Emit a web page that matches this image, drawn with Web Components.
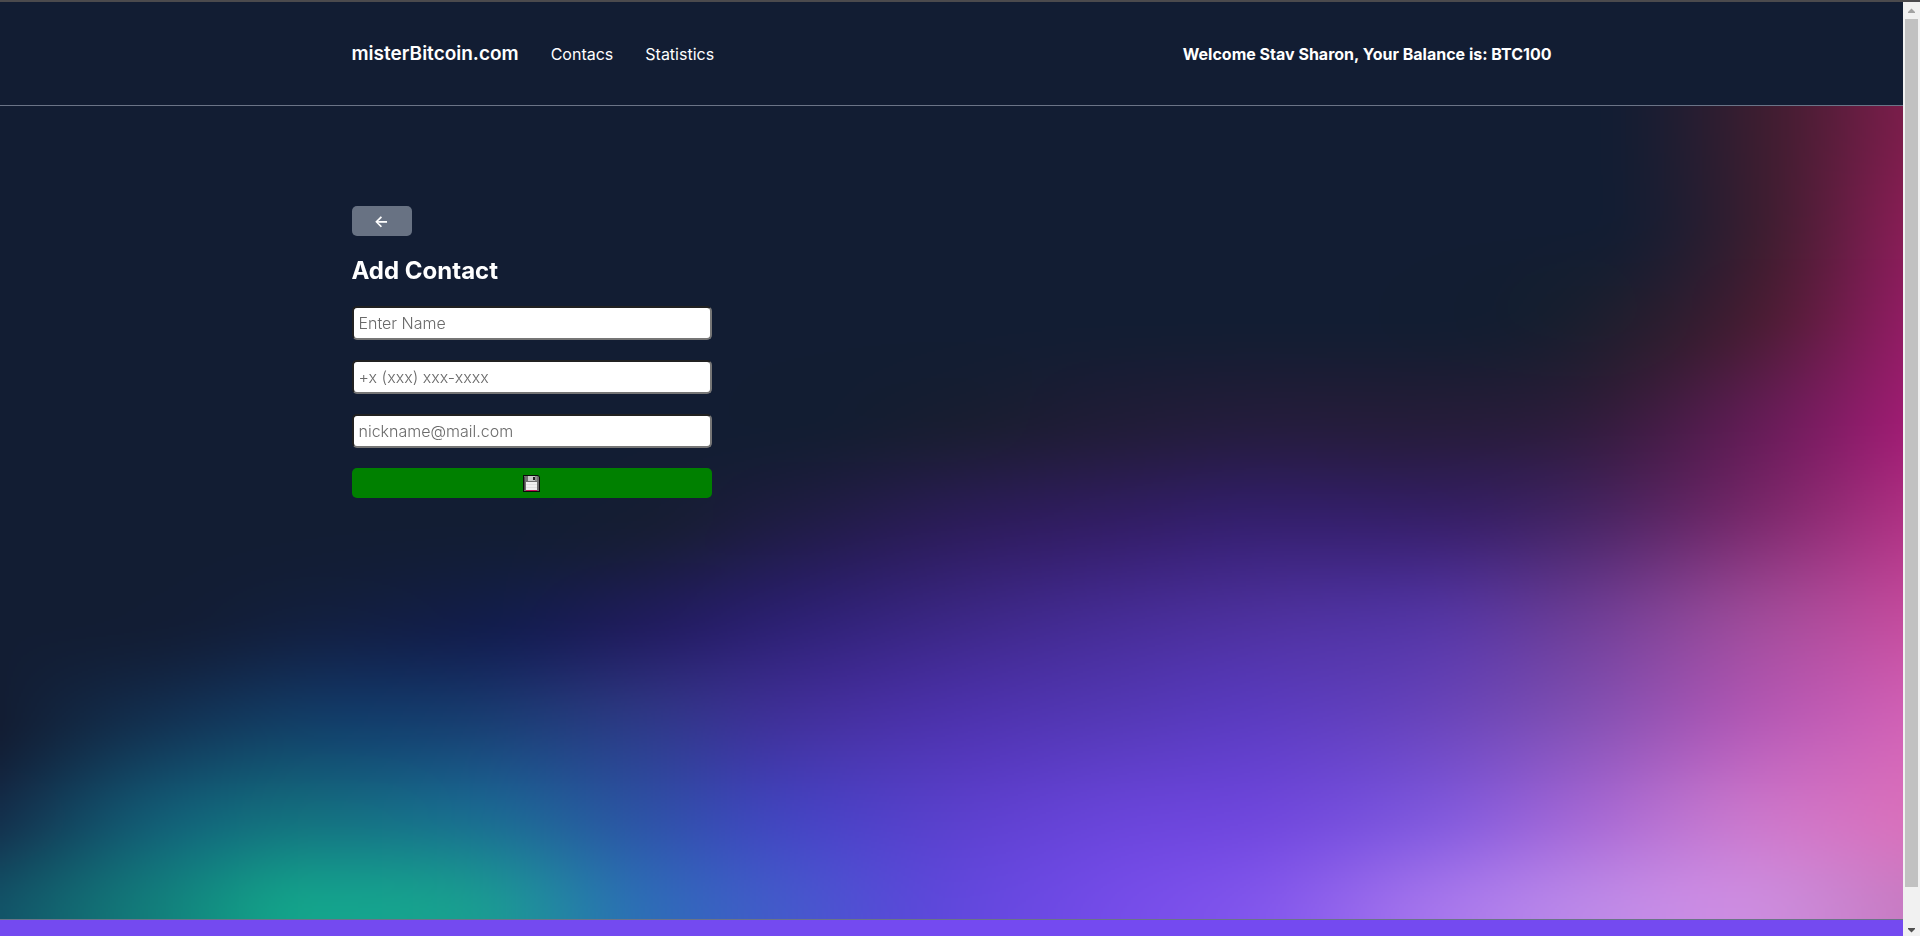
<!DOCTYPE html>
<html lang="en">
<head>
<meta charset="utf-8">
<meta name="viewport" content="width=device-width, initial-scale=1">
<title>misterBitcoin.com</title>
<style>
  body { margin: 0; font-family: Inter, "Liberation Sans", sans-serif; font-size: 16px; color: #fff; background: #121d33; }
</style>
</head>
<body>
<mb-app>
  <mb-header slot="header" user="Stav Sharon" balance="BTC100"></mb-header>
  <mb-contact-edit>Add Contact</mb-contact-edit>
</mb-app>

<script>
const define = (name, html, setup) => {
  const template = document.createElement('template');
  template.innerHTML = html;
  customElements.define(name, class extends HTMLElement {
    constructor() {
      super();
      this.attachShadow({ mode: 'open' }).append(template.content.cloneNode(true));
    }
    connectedCallback() { if (setup) setup(this, this.shadowRoot); }
  });
};

/* Mesh gradient: a grid of colours, spread evenly and blended smoothly. */
const MESH = [
  '121d33 121d33 121d33 121d33 121d33 121d33 121d33 121d33 121d33 121d33 121d33 371d30 7a1d4a',
  '121d33 121d33 121d33 121d33 121d33 121d33 121d33 121d33 121d33 121d33 121d33 361d30 841d52',
  '121d33 121d33 121d33 121d33 121d33 121d33 121d33 121d33 121d33 121d32 1a1e2f 421c32 8e1c60',
  '121d33 121d33 121d33 121d33 121d33 121d32 171d31 1e1c36 221c3a 231c38 2e1c3a 5c1c50 9c1c70',
  '121d33 121d33 121d33 121d33 151d33 1e1c42 291c54 301d60 331f6a 351f66 462462 75286a ad3082',
  '121d33 121d34 121f3e 121d48 1e1c58 2c2070 3a2682 442b92 4c309c 5234a0 6c3c94 9a4897 c24a9c',
  '121d33 123050 123c66 183c70 2c3884 40309a 4c32ac 5438b6 5c3cc0 6844bc 8450b4 b058b4 d060b4',
  '13304c 125c74 147080 1a6c90 2c54a4 4444c0 5a40cc 6844d8 7048dc 8058dc a468d4 c876cc d870bc',
  '125468 12807c 14a48c 1a9c92 2c70b4 4658cc 6048dc 744ce8 8458ec a474ec bc88e8 cc8ce0 c87cc4'
].map(row => row.split(' ').map(c => [0, 2, 4].map(i => parseInt(c.slice(i, i + 2), 16))));

define('mb-mesh', `
  <style>
    :host { display: block; overflow: hidden; }
    canvas { display: block; width: 100%; height: 100%; }
  </style>
  <canvas width="960" height="408" aria-hidden="true"></canvas>`,
(el, root) => {
  const canvas = root.querySelector('canvas');
  const ctx = canvas.getContext('2d');
  const { width, height } = canvas;
  const image = ctx.createImageData(width, height);
  const rows = MESH.length, cols = MESH[0].length;
  const at = (list, i) => list[Math.max(0, Math.min(list.length - 1, i))];
  /* Monotone cubic: never overshoots the colours of the grid. */
  const slope = (p, q) => p * q <= 0 ? 0 : Math.sign(p) * Math.min(Math.abs(p + q) / 2, 3 * Math.abs(p), 3 * Math.abs(q));
  const spline = (a, b, c, d, t) => {
    const m = slope(b - a, c - b), n = slope(c - b, d - c), s = 1 - t;
    return b * s * s * (1 + 2 * t) + m * t * s * s + c * t * t * (3 - 2 * t) - n * t * t * s;
  };
  for (let y = 0; y < height; y++) {
    const v = y / (height - 1) * (rows - 1), j = Math.min(rows - 2, Math.floor(v));
    const line = MESH[0].map((_, i) => [0, 1, 2].map(k => spline(
      at(MESH, j - 1)[i][k], MESH[j][i][k], MESH[j + 1][i][k], at(MESH, j + 2)[i][k], v - j)));
    /* Carry the trend on past the side edges. */
    const beyond = (edge, inner) => edge.map((c, k) => 2 * c - inner[k]);
    const wide = [beyond(line[0], line[1]), ...line, beyond(line[cols - 1], line[cols - 2])];
    for (let x = 0; x < width; x++) {
      const u = x / (width - 1) * (cols - 1), i = Math.min(cols - 2, Math.floor(u));
      const p = (y * width + x) * 4;
      for (let k = 0; k < 3; k++)
        image.data[p + k] = spline(wide[i][k], wide[i + 1][k], wide[i + 2][k], wide[i + 3][k], u - i);
      image.data[p + 3] = 255;
    }
  }
  ctx.putImageData(image, 0, 0);
});

define('mb-header', `
  <style>
    :host { display: block; background: #121d33; border-bottom: 1px solid #6b7487; }
    .row { display: flex; align-items: center; gap: 32px; max-width: 1200px; height: 103px; margin: 0 auto; }
    h1 { margin: 0; font-size: 19px; font-weight: 600; line-height: 24px; }
    nav { display: flex; gap: 32px; }
    a { color: inherit; text-decoration: none; line-height: 20px; }
    p { margin: 0 0 0 auto; font-weight: 700; line-height: 20px; }
  </style>
  <header class="row">
    <h1>misterBitcoin.com</h1>
    <nav><a href="#contacts">Contacs</a><a href="#statistics">Statistics</a></nav>
    <p></p>
  </header>`,
(el, root) => {
  root.querySelector('p').textContent =
    `Welcome ${el.getAttribute('user')}, Your Balance is: ${el.getAttribute('balance')}`;
});

define('mb-field', `
  <style>
    :host { display: block; }
    input { display: block; box-sizing: border-box; width: 100%; height: 34px; padding: 4px 5px; margin: 0;
      font: inherit; font-weight: 300; background: #fff; color: #000; border: 2px inset #767676; border-radius: 5px; }
    input::placeholder { color: #6a6a6a; }
  </style>
  <input>`,
(el, root) => {
  const input = root.querySelector('input');
  input.type = el.getAttribute('type');
  input.placeholder = el.getAttribute('placeholder');
  input.setAttribute('aria-label', el.getAttribute('label'));
});

define('mb-button', `
  <style>
    :host { display: block; }
    button { display: flex; align-items: center; justify-content: center; width: 100%; height: 30px;
      padding: 0; border: 0; border-radius: 5px; font: inherit; font-weight: 600; color: #fff;
      background: var(--fill, #687283); cursor: pointer; }
  </style>
  <button type="button"><slot></slot></button>`,
(el, root) => root.querySelector('button').setAttribute('aria-label', el.getAttribute('label')));

define('mb-contact-edit', `
  <style>
    :host { display: block; max-width: 1200px; margin: 0 auto; padding-top: 100px; }
    .back { width: 60px; }
    h2 { margin: 20px 0; font-size: 24px; font-weight: 700; line-height: 30px; }
    form { display: grid; gap: 20px; max-width: 360px; }
    .save { --fill: #008000; }
    svg { display: block; }
  </style>
  <mb-button class="back" label="Back">←</mb-button>
  <h2><slot></slot></h2>
  <form>
    <mb-field type="text" label="Name" placeholder="Enter Name"></mb-field>
    <mb-field type="tel" label="Phone" placeholder="+x (xxx) xxx-xxxx"></mb-field>
    <mb-field type="email" label="Email" placeholder="nickname@mail.com"></mb-field>
    <mb-button class="save" label="Save">
      <svg width="17" height="17" viewBox="0 0 17 17" aria-hidden="true">
        <path d="M0 0H15L17 2V17H0Z" fill="#0b0b0b"/>
        <path d="M1 1H15L16 2V16H1Z" fill="#6f6f6f"/>
        <path d="M1 2H2V15H1Z" fill="#4a4a4a"/>
        <path d="M5 1H12V6H5Z" fill="#c9c9c9"/>
        <path d="M10 2H12V5H10Z" fill="#222"/>
        <path d="M12 1H14V6H12Z" fill="#8f8f8f"/>
        <path d="M3 7H14V15H3Z" fill="#f0f0f0"/>
        <path d="M3 9.500H14M3 12.500H14" stroke="#e2e2e2" stroke-width="1"/>
        <path d="M3 15H14V16H3Z" fill="#c8175d"/>
      </svg>
    </mb-button>
  </form>`);

define('mb-scrollbar', `
  <style>
    :host { display: flex; flex-direction: column; background: #f1f1f1; }
    svg { display: block; flex: none; }
    .track { display: grid; flex: 1; padding: 0 2px 32px; }
    .thumb { background: #c1c1c1; }
  </style>
  <svg width="17" height="17" viewBox="0 0 17 17"><path d="M5 10V11H12V10L8.5 6.5Z" fill="#a3a3a3"/></svg>
  <div class="track"><div class="thumb"></div></div>
  <svg width="17" height="17" viewBox="0 0 17 17"><path d="M5 10V9H12V10L8.500 13.500Z" fill="#505050"/></svg>`);

define('mb-app', `
  <style>
    :host { display: grid; grid-template-columns: minmax(0, 1fr) 17px; grid-template-rows: minmax(0, 1fr);
      height: 100vh; box-sizing: border-box; overflow: hidden; border-top: 2px solid #4b4a4d; }
    .page { display: grid; grid-template-rows: auto minmax(0, 1fr) 17px; }
    main { position: relative; }
    mb-mesh { position: absolute; inset: 0; z-index: -1; }
    footer { background: #744af0; border-top: 1px solid #6b7487; }
  </style>
  <div class="page">
    <slot name="header"></slot>
    <main><mb-mesh></mb-mesh><slot></slot></main>
    <footer></footer>
  </div>
  <mb-scrollbar></mb-scrollbar>`);
</script>
</body>
</html>
